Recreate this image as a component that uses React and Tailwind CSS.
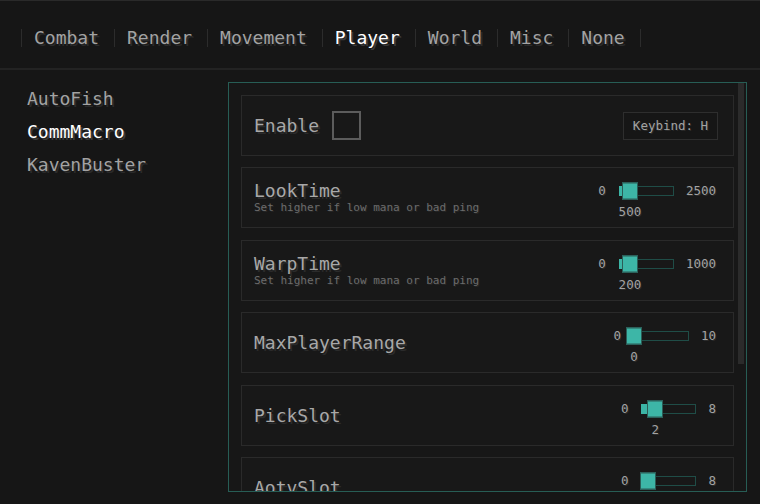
import React from "react";

const tabs = ["Combat", "Render", "Movement", "Player", "World", "Misc", "None"];
const modules = ["AutoFish", "CommMacro", "KavenBuster"];

const settings = [
  { type: "enable" },
  { type: "slider", name: "LookTime", desc: "Set higher if low mana or bad ping", min: 0, max: 2500, value: 500 },
  { type: "slider", name: "WarpTime", desc: "Set higher if low mana or bad ping", min: 0, max: 1000, value: 200 },
  { type: "slider", name: "MaxPlayerRange", min: 0, max: 10, value: 0 },
  { type: "slider", name: "PickSlot", min: 0, max: 8, value: 2 },
  { type: "slider", name: "AotvSlot", min: 0, max: 8, value: 1 },
];

const big = "text-[18px] leading-[21px] [text-shadow:2px_2px_0_#2b2b2b]";
const small = "text-[12.5px] leading-[14px] text-[#a3a3a3] [text-shadow:1px_1px_0_#2b2b2b]";

function Slider({ min, max, value }) {
  const frac = (value - min) / (max - min);
  const W = 55;
  return (
    <div className="flex flex-col">
      <div className="flex items-center h-[17px]">
        <span className={small}>{min}</span>
        <div className="relative w-[55px] h-[10px] ml-[13px] mr-[12px] border border-[#1f4d47]">
          <div
            className="absolute top-[-1px] bottom-[-1px] left-[-1px] bg-[#3cb5a6]"
            style={{ width: frac * W + 1 }}
          />
          <div
            className="absolute top-1/2 -translate-y-1/2 w-[16px] h-[17px] bg-[#3db6a7] border border-[#2c5d57]"
            style={{ left: frac * W - 9 }}
          />
          <span
            className={"absolute top-[18px] -translate-x-1/2 " + small}
            style={{ left: frac * W - 1 }}
          >
            {value}
          </span>
        </div>
        <span className={small}>{max}</span>
      </div>
      <div className="h-[13px]" />
    </div>
  );
}

function Card({ s }) {
  if (s.type === "enable") {
    return (
      <div className="shrink-0 h-[61px] border border-[#2a2a2a] bg-[#181818] flex items-center pl-[12px] pr-[15px]">
        <span className={big + " text-[#a8a8a8]"}>Enable</span>
        <div className="ml-[13px] w-[29px] h-[29px] border-2 border-[#5c5c5c]" />
        <div className="flex-1" />
        <div className={"w-[95px] h-[28px] border border-[#2e2e2e] bg-[#161616] flex items-center justify-center " + small}>
          Keybind: H
        </div>
      </div>
    );
  }
  return (
    <div className="shrink-0 h-[61px] border border-[#2a2a2a] bg-[#181818] flex items-center pl-[12px] pr-[17px]">
      <div className="flex flex-col flex-1">
        <span className={big + " text-[#a8a8a8]"}>{s.name}</span>
        {s.desc && (
          <span className="text-[11px] leading-[14px] text-[#6c6c6c] [text-shadow:1px_1px_0_#262626]">{s.desc}</span>
        )}
      </div>
      <Slider min={s.min} max={s.max} value={s.value} />
    </div>
  );
}

export default function App() {
  return (
    <div
      className="w-[760px] h-[504px] bg-[#161616] border-t border-[#2a2a2a] overflow-hidden flex flex-col"
      style={{ fontFamily: '"DejaVu Sans Mono", "Liberation Mono", monospace' }}
    >
      <div className="h-[69px] shrink-0 flex items-center pt-[6px] pl-[21px] border-b-2 border-[#232323]">
        {tabs.map((t, i) => (
          <div key={t} className="flex items-center">
            <span className="w-px h-[18px] bg-[#2c2c2c]" />
            <span
              className={
                "pl-[12px] pr-[15px] " + big + (t === "Player" ? " text-white [text-shadow:2px_2px_0_#3a3a3a]" : " text-[#a3a3a3]")
              }
            >
              {t}
            </span>
            {i === tabs.length - 1 && <span className="w-px h-[18px] bg-[#2c2c2c]" />}
          </div>
        ))}
      </div>
      <div className="flex pt-[12px]">
        <div className="w-[228px] shrink-0 pl-[27px] flex flex-col">
          {modules.map((m) => (
            <span
              key={m}
              className={
                "text-[18px] leading-[33px] [text-shadow:2px_2px_0_#2b2b2b] " +
                (m === "CommMacro" ? "text-white [text-shadow:2px_2px_0_#3a3a3a]" : "text-[#a3a3a3]")
              }
            >
              {m}
            </span>
          ))}
        </div>
        <div className="relative w-[519px] h-[410px] border border-[#275d55] bg-[#171717] overflow-hidden">
          <div className="flex flex-col gap-[11.4px] pl-[12px] pt-[12px] pr-[12px]">
            {settings.map((s, i) => (
              <Card key={i} s={s} />
            ))}
          </div>
          <div className="absolute right-[2px] top-0 w-[6px] h-[281px] bg-[#2b2b2b]" />
        </div>
      </div>
    </div>
  );
}
